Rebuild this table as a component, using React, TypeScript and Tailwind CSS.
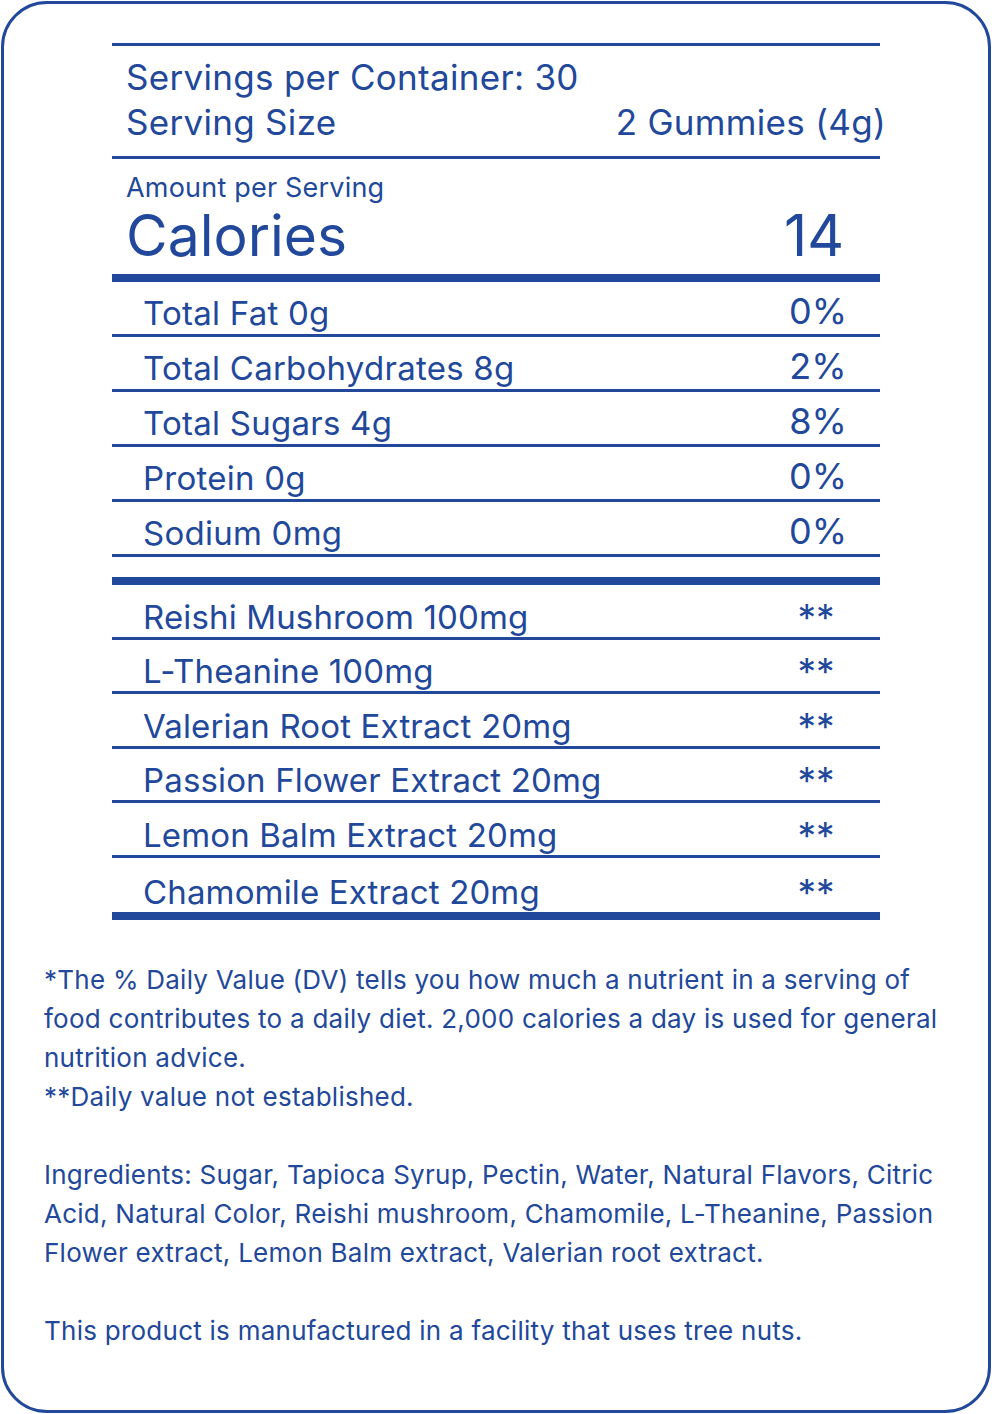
import React from 'react';

const nutrients = [
  { name: 'Total Fat 0g', dv: '0%' },
  { name: 'Total Carbohydrates 8g', dv: '2%' },
  { name: 'Total Sugars 4g', dv: '8%' },
  { name: 'Protein 0g', dv: '0%' },
  { name: 'Sodium 0mg', dv: '0%' },
];

const extras = [
  'Reishi Mushroom 100mg',
  'L-Theanine 100mg',
  'Valerian Root Extract 20mg',
  'Passion Flower Extract 20mg',
  'Lemon Balm Extract 20mg',
  'Chamomile Extract 20mg',
];

function NutrientRow({ name, dv }: { name: string; dv: string }) {
  return (
    <div className="flex h-[55px] items-end justify-between border-b-[3px] border-[#21489a]">
      <span className="pl-[31px] pb-[4px] text-[33px] leading-[33px] tracking-[0.25px]">{name}</span>
      <span className="w-[92px] pb-[5px] pr-[32px] text-center text-[36px] leading-[36px]">{dv}</span>
    </div>
  );
}

function ExtraRow({ name, last }: { name: string; last?: boolean }) {
  return (
    <div
      className={
        'flex h-[54.5px] items-end justify-between ' + (last ? '' : 'border-b-[3px] border-[#21489a]')
      }
    >
      <span className="pl-[31px] pb-[3px] text-[33px] leading-[33px] tracking-[0.15px]">{name}</span>
      <span className="w-[92px] translate-y-[4px] pb-[5px] pr-[36px] text-center text-[37px] leading-[36px]">
        **
      </span>
    </div>
  );
}

export default function App() {
  return (
    <div className="h-[1414px] w-[992px] bg-white p-px" style={{ fontFamily: 'Inter, "Noto Sans", sans-serif' }}>
      <div className="h-full rounded-[46px] border-[3px] border-[#21489a] text-[#21489a]">
        <div className="ml-[108px] mt-[39px] w-[768px]">
          <div className="border-t-[3px] border-[#21489a]" />
          <div className="px-[14px] pt-[14px] pb-[16px] text-[35px] leading-[35px] tracking-[0.3px]">
            <div>Servings per Container: 30</div>
            <div className="mt-[10px] flex justify-between">
              <span>Serving Size</span>
              <span className="-mr-[20px]">2 Gummies (4g)</span>
            </div>
          </div>
          <div className="border-t-[3px] border-[#21489a]" />
          <div className="px-[14px] pt-[15px] pb-[10px]">
            <div className="text-[27px] leading-[27px] tracking-[0.2px]">Amount per Serving</div>
            <div className="mt-[6px] flex justify-between text-[57px] leading-[57px]">
              <span>Calories</span>
              <span className="pr-[22px]">14</span>
            </div>
          </div>
          <div className="h-[8px] bg-[#21489a]" />
          {nutrients.map((n) => (
            <NutrientRow key={n.name} name={n.name} dv={n.dv} />
          ))}
          <div className="mt-[20px] h-[8px] bg-[#21489a]" />
          {extras.map((e, i) => (
            <ExtraRow key={e} name={e} last={i === extras.length - 1} />
          ))}
          <div className="h-[8px] bg-[#21489a]" />
        </div>
        <div className="mt-[40px] pl-[40px] pr-[38px] text-[26px] leading-[39px] tracking-[0.25px]">
          <p>
            *The % Daily Value (DV) tells you how much a nutrient in a serving of food contributes to a daily diet. 2,000
            calories a day is used for general nutrition advice.
          </p>
          <p>**Daily value not established.</p>
          <p className="mt-[39px]">
            Ingredients: Sugar, Tapioca Syrup, Pectin, Water, Natural Flavors, Citric Acid, Natural Color, Reishi
            mushroom, Chamomile, L-Theanine, Passion Flower extract, Lemon Balm extract, Valerian root extract.
          </p>
          <p className="mt-[39px]">This product is manufactured in a facility that uses tree nuts.</p>
        </div>
      </div>
    </div>
  );
}
